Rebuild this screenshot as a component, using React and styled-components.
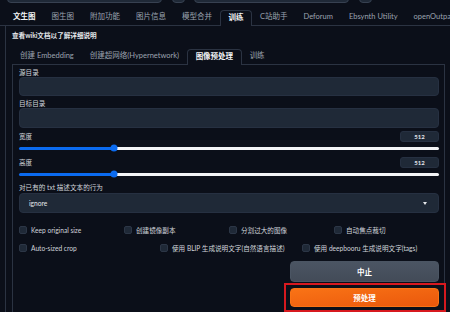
import React from "react";
import styled, { createGlobalStyle } from "styled-components";

const Global = createGlobalStyle`
  html, body {
    margin: 0;
    padding: 0;
    background: #0b0f19;
    overflow: hidden;
  }
  body {
    font-family: Lato, "Noto Sans CJK SC", sans-serif;
    color: #d1d5db;
  }
`;

const Page = styled.div`
  width: 450px;
  height: 312px;
  overflow: hidden;
  background: #0b0f19;
`;

const TopStrip = styled.div`
  height: 3px;
  display: flex;
  align-items: flex-end;
  gap: 9.5px;
  padding-left: 7px;
  overflow: hidden;
`;

const TopBox = styled.div`
  flex: none;
  width: ${(p) => p.w}px;
  height: 14px;
  background: #1f2937;
  border: 1px solid #374151;
  border-radius: 4px;
  box-sizing: border-box;
`;

const TabBar = styled.div`
  display: flex;
  margin-top: 7px;
  padding-left: ${(p) => p.pad || 0}px;
  border-bottom: 1px solid #2b3342;
  height: 15px;
  white-space: nowrap;
`;

const Tab = styled.div`
  flex: none;
  padding: 0 8px;
  height: 15px;
  box-sizing: border-box;
  line-height: 14px;
  font-size: 7.5px;
  color: ${(p) => (p.bright ? "#f3f4f6" : "#9ca3af")};
  font-weight: ${(p) => (p.bright || p.active ? 700 : 400)};
  ${(p) =>
    p.active &&
    `
    color: #f3f4f6;
    border: 1px solid #2b3342;
    border-bottom: none;
    border-radius: 4px 4px 0 0;
    background: #0b0f19;
    height: 16px;
    margin-bottom: -1px;
    padding: 0 7.5px;
  `}
`;

const OuterPanel = styled.div`
  margin-left: 5px;
  border-left: 1px solid #2b3342;
  padding: 0 0 0 6px;
  height: 290px;
`;

const WikiNote = styled.div`
  font-size: 6.6px;
  font-weight: 700;
  color: #e5e7eb;
  line-height: 10px;
  padding-top: 4px;
`;

const SubTabs = styled(TabBar)`
  margin-top: 9px;
  width: 433px;
`;

const InnerPanel = styled.div`
  width: 433px;
  box-sizing: border-box;
  border: 1px solid #2b3342;
  border-top: none;
  border-radius: 0 0 5px 5px;
  padding: 3px 5px 6px 6px;
  height: 252px;
`;

const Label = styled.div`
  font-size: 6.6px;
  line-height: 9px;
  height: 9px;
  color: #d1d5db;
  white-space: nowrap;
  margin-top: ${(p) => p.mt || 0}px;
`;

const TextBox = styled.div`
  height: ${(p) => p.h || 19}px;
  background: #1f2937;
  border: 1px solid #263041;
  box-sizing: border-box;
  border-radius: 4px;
`;

const LabelRow = styled.div`
  display: flex;
  justify-content: space-between;
  align-items: center;
  height: 11px;
  margin-top: ${(p) => p.mt || 0}px;
`;

const NumberBox = styled.div`
  width: 39px;
  height: 11px;
  border-radius: 3px;
  background: #1f2937;
  border: 1px solid #263041;
  box-sizing: border-box;
  font-size: 6px;
  font-weight: 700;
  line-height: 9px;
  text-align: center;
  color: #e5e7eb;
`;

const SliderRow = styled.div`
  position: relative;
  height: 8px;
  margin-top: 2px;
  display: flex;
  align-items: center;
`;

const Track = styled.div`
  position: relative;
  width: 100%;
  height: 3px;
  border-radius: 2px;
  background: linear-gradient(
    to right,
    #0b6bf0 0,
    #0b6bf0 ${(p) => p.pct}%,
    #f3f4f6 ${(p) => p.pct}%,
    #f3f4f6 100%
  );
`;

const Thumb = styled.div`
  position: absolute;
  top: 50%;
  width: 7px;
  height: 7px;
  border-radius: 50%;
  background: #0b6bf0;
  transform: translate(-50%, -50%);
`;

const Select = styled(TextBox)`
  height: 20px;
  display: flex;
  align-items: center;
  justify-content: space-between;
  padding: 0 11px 0 9px;
  font-size: 6.6px;
  color: #e5e7eb;
  margin-top: 1px;
`;

const Caret = styled.div`
  width: 0;
  height: 0;
  border-left: 2.5px solid transparent;
  border-right: 2.5px solid transparent;
  border-top: 3px solid #e5e7eb;
`;

const CheckRow = styled.div`
  display: grid;
  grid-template-columns: ${(p) => p.cols};
  height: 10px;
  align-items: center;
  margin-top: ${(p) => p.mt}px;
`;

const Check = styled.div`
  display: flex;
  align-items: center;
  gap: 4px;
  font-size: 6.6px;
  color: #d1d5db;
  white-space: nowrap;
`;

const Box = styled.div`
  flex: none;
  width: 8px;
  height: 8px;
  border-radius: 2px;
  background: #1f2937;
  border: 1px solid #2c3646;
  box-sizing: border-box;
`;

const Actions = styled.div`
  display: flex;
  flex-direction: column;
  align-items: flex-end;
  margin-top: 8px;
`;

const Button = styled.div`
  width: 149px;
  height: ${(p) => p.h}px;
  border-radius: 4px;
  display: flex;
  align-items: center;
  justify-content: center;
  font-size: 7.5px;
  font-weight: 700;
  color: #fff;
  background: ${(p) =>
    p.primary
      ? "linear-gradient(to bottom right, #f97316, #ea580c)"
      : "linear-gradient(to bottom, #4b5563, #434b58)"};
  border: 1px solid ${(p) => (p.primary ? "#f97316" : "#4b5563")};
  box-sizing: border-box;
`;

const Highlight = styled.div`
  margin: 1px -7px 0 0;
  padding: 3px 5px 3px 4px;
  border: 2px solid #d7191f;
`;

const Slider = ({ pct }) => (
  <SliderRow>
    <Track pct={pct}>
      <Thumb style={{ left: `${pct}%` }} />
    </Track>
  </SliderRow>
);

const mainTabs = ["文生图", "图生图", "附加功能", "图片信息", "模型合并", "训练", "C站助手", "Deforum", "Ebsynth Utility", "openOutpaint"];
const subTabs = ["创建 Embedding", "创建超网络(Hypernetwork)", "图像预处理", "训练"];

export default function App() {
  return (
    <Page>
      <Global />
      <TopStrip>
        <TopBox w={155} />
        <TopBox w={13} />
        <TopBox w={155} />
        <TopBox w={13} />
      </TopStrip>
      <TabBar pad={5}>
        {mainTabs.map((t) => (
          <Tab key={t} bright={t === "文生图"} active={t === "训练"}>
            {t}
          </Tab>
        ))}
      </TabBar>
      <OuterPanel>
        <WikiNote>查看wiki文档以了解详细说明</WikiNote>
        <SubTabs>
          {subTabs.map((t, i) => (
            <Tab key={t + i} active={i === 2}>
              {t}
            </Tab>
          ))}
        </SubTabs>
        <InnerPanel>
          <Label>源目录</Label>
          <TextBox />
          <Label mt={3}>目标目录</Label>
          <TextBox h={20} />
          <LabelRow mt={3}>
            <Label>宽度</Label>
            <NumberBox>512</NumberBox>
          </LabelRow>
          <Slider pct={22.6} />
          <LabelRow mt={5}>
            <Label>高度</Label>
            <NumberBox>512</NumberBox>
          </LabelRow>
          <Slider pct={22.6} />
          <Label mt={5}>对已有的 txt 描述文本的行为</Label>
          <Select>
            <span>ignore</span>
            <Caret />
          </Select>
          <CheckRow cols="repeat(4, 1fr)" mt={12}>
            <Check><Box />Keep original size</Check>
            <Check><Box />创建镜像副本</Check>
            <Check><Box />分割过大的图像</Check>
            <Check><Box />自动焦点裁切</Check>
          </CheckRow>
          <CheckRow cols="141px 142px 1fr" mt={8}>
            <Check><Box />Auto-sized crop</Check>
            <Check><Box />使用 BLIP 生成说明文字(自然语言描述)</Check>
            <Check><Box />使用 deepbooru 生成说明文字(tags)</Check>
          </CheckRow>
          <Actions>
            <Button h={21}>中止</Button>
            <Highlight>
              <Button primary h={19}>预处理</Button>
            </Highlight>
          </Actions>
        </InnerPanel>
      </OuterPanel>
    </Page>
  );
}
